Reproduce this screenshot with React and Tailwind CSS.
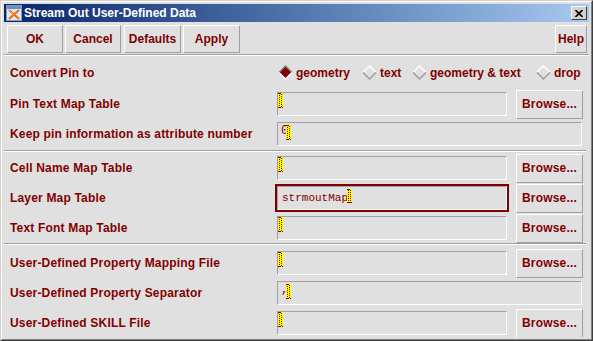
import React from 'react';

const Cursor = ({ tall }) => (
  <span className={`relative inline-block w-[5px] ${tall ? 'h-[14px]' : 'h-[15px]'} bg-[#ffff00] shrink-0`}>
    <span className="absolute left-[1px] top-0 h-full border-l border-dotted border-[#800000]" />
    <span className="absolute left-[3px] top-[1px] h-[13px] border-l border-dotted border-[#800000]" />
    <span className="absolute left-0 bottom-0 w-full border-b border-dotted border-[#800000]" />
    <span className="absolute left-0 top-0 w-[3px] border-t border-dotted border-[#800000]" />
  </span>
);

const Field = ({ wide, focus, children }) => (
  <div
    className={`${wide ? 'w-[305px]' : 'w-[230px]'} h-[24px] shrink-0 border border-t-[#a0a0a0] border-l-[#a0a0a0] border-b-white border-r-white flex items-start pl-0 ${
      focus ? 'outline-2 outline-[#800000]' : ''
    }`}
  >
    {children || <Cursor />}
  </div>
);

const Browse = () => (
  <button className="ml-[9px] w-[67px] h-[29px] shrink-0 border border-t-white border-l-white border-b-[#a0a0a0] border-r-[#a0a0a0] text-[12px] font-bold text-[#800000] tracking-[0.2px] flex items-center justify-center">
    Browse...
  </button>
);

const Row = ({ label, children, h = 'h-[30px]' }) => (
  <div className={`${h} flex items-center`}>
    <div className="w-[273px] pl-[6px] shrink-0 text-[12px] font-bold text-[#800000] tracking-[0.18px] whitespace-nowrap">{label}</div>
    {children}
  </div>
);

const Sep = () => <div className="h-[2px] border-t border-t-[#a0a0a0] border-b border-b-white mr-[3px]" />;

const Diamond = ({ on }) => (
  <svg width="15" height="15" viewBox="0 0 15 15" className="shrink-0">
    <polygon points="7.5,1 14,7.5 7.5,14 1,7.5" fill={on ? '#800000' : '#e0e0e0'} />
    <polyline points="1,7.5 7.5,1 14,7.5" fill="none" stroke={on ? '#808080' : '#ffffff'} strokeWidth="1.4" />
    <polyline points="1,7.5 7.5,14 14,7.5" fill="none" stroke={on ? '#ffffff' : '#9a9a9a'} strokeWidth="1.4" />
  </svg>
);

const Radio = ({ on, label, w }) => (
  <div className={`${w} flex items-center gap-[3px] shrink-0 text-[12px] font-bold text-[#800000] whitespace-nowrap`}>
    <Diamond on={on} />
    <span>{label}</span>
  </div>
);

const ToolBtn = ({ w, children }) => (
  <button className={`${w} h-[28px] border border-t-white border-l-white border-b-[#a0a0a0] border-r-[#a0a0a0] text-[12px] font-bold text-[#800000] flex items-center justify-center`}>
    {children}
  </button>
);

export default function App() {
  return (
    <div className="w-[593px] h-[341px] overflow-hidden font-['Liberation_Sans',Arial,sans-serif] border border-t-[#d4d0c8] border-l-[#d4d0c8] border-b-[#404040] border-r-[#404040] bg-[#e0e0e0]">
      <div className="h-full border border-t-white border-l-white border-b-[#808080] border-r-[#808080] p-[2px] flex flex-col">
        {/* Title bar */}
        <div className="h-[18px] shrink-0 bg-linear-to-r from-[#0a246a] to-[#a6caf0] flex items-center pl-[2px] pr-[2px]">
          <svg width="16" height="16" viewBox="0 0 16 16" className="shrink-0">
            <rect x="0.5" y="0.5" width="15" height="15" fill="#dbe8f8" stroke="#7f9db9" />
            <rect x="1" y="1" width="14" height="3" fill="#6d8fc8" />
            <path d="M3 5 L13 14 M13 5 L3 14" stroke="#f07010" strokeWidth="2.2" />
            <path d="M3 5 L8 9.5" stroke="#ffb040" strokeWidth="1" />
          </svg>
          <span className="ml-[2px] text-white text-[12px] font-bold whitespace-nowrap">Stream Out User-Defined Data</span>
          <div className="flex-1" />
          <div className="w-[16px] h-[14px] bg-[#d4d0c8] border border-t-white border-l-white border-b-[#404040] border-r-[#404040] flex items-center justify-center">
            <svg width="8" height="7" viewBox="0 0 8 7">
              <path d="M0.5 0 L7.5 7 M7.5 0 L0.5 7" stroke="#000" strokeWidth="1.6" />
            </svg>
          </div>
        </div>

        {/* Client */}
        <div className="flex-1 flex flex-col overflow-hidden">
          {/* Toolbar */}
          <div className="h-[32px] shrink-0 flex items-start pt-[3px] pl-[3px] pr-[2px]">
            <ToolBtn w="w-[56px]">OK</ToolBtn>
            <div className="w-[2px]" />
            <ToolBtn w="w-[56px]">Cancel</ToolBtn>
            <div className="w-[3px]" />
            <ToolBtn w="w-[57px]">Defaults</ToolBtn>
            <div className="w-[2px]" />
            <ToolBtn w="w-[57px]">Apply</ToolBtn>
            <div className="flex-1" />
            <ToolBtn w="w-[32px]">Help</ToolBtn>
          </div>
          <div className="h-[2px] border-t border-t-[#a0a0a0] border-b border-b-white" />

          {/* Group 1 */}
          <div className="pb-[1px]">
            <Row label="Convert Pin to" h="h-[33px]">
              <div className="flex items-center ml-[1px]">
                <Radio on label="geometry" w="w-[84px]" />
                <Radio label="text" w="w-[50px]" />
                <Radio label="geometry & text" w="w-[124px]" />
                <Radio label="drop" w="w-auto" />
              </div>
            </Row>
            <Row label="Pin Text Map Table">
              <Field />
              <Browse />
            </Row>
            <Row label="Keep pin information as attribute number">
              <Field wide>
                <div className="flex items-start pl-[3px]">
                  <span className="font-['Liberation_Mono',monospace] text-[12px] leading-[14px] text-[#800000] mt-[1px]">0</span>
                  <span className="-ml-[2px]"><Cursor /></span>
                </div>
              </Field>
            </Row>
          </div>
          <Sep />

          {/* Group 2 */}
          <div className="pt-[1px]">
            <Row label="Cell Name Map Table">
              <Field />
              <Browse />
            </Row>
            <Row label="Layer Map Table">
              <Field focus>
                <div className="flex items-center h-full pl-[4px]">
                  <span className="font-['Liberation_Mono',monospace] text-[11px] text-[#800000]">strmoutMap</span>
                  <span className="-ml-[1px]"><Cursor tall /></span>
                </div>
              </Field>
              <Browse />
            </Row>
            <Row label="Text Font Map Table">
              <Field />
              <Browse />
            </Row>
          </div>
          <Sep />

          {/* Group 3 */}
          <div className="pt-[3px]">
            <Row label="User-Defined Property Mapping File">
              <Field />
              <Browse />
            </Row>
            <Row label="User-Defined Property Separator">
              <Field wide>
                <div className="flex items-start pl-[3px]">
                  <span className="font-['Liberation_Mono',monospace] text-[12px] leading-[14px] text-[#800000] mt-[1px]">,</span>
                  <span className="-ml-[2px]"><Cursor /></span>
                </div>
              </Field>
            </Row>
            <Row label="User-Defined SKILL File">
              <Field />
              <Browse />
            </Row>
          </div>
        </div>
      </div>
    </div>
  );
}
